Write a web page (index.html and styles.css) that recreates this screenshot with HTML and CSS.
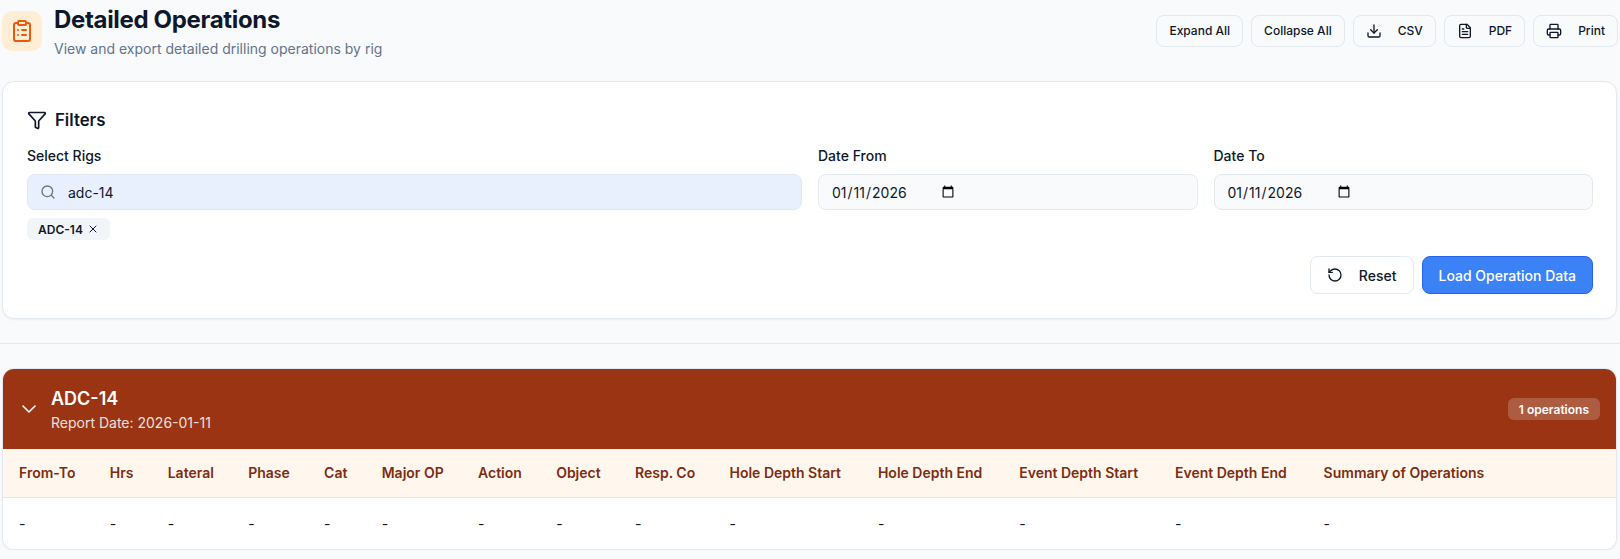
FILE: index.html
```html
<!DOCTYPE html>
<html lang="en">
<head>
<meta charset="utf-8">
<title>Detailed Operations</title>
<link rel="stylesheet" href="styles.css">
</head>
<body>
<div class="page">
  <header class="page-header">
    <div class="heading">
      <div class="heading-icon">
        <svg class="ico-24" viewBox="0 0 24 24"><rect x="8" y="2" width="8" height="4" rx="1"/><path d="M16 4h2a2 2 0 0 1 2 2v14a2 2 0 0 1-2 2H6a2 2 0 0 1-2-2V6a2 2 0 0 1 2-2h2"/><path d="M12 11h4"/><path d="M12 16h4"/><path d="M8 11h.01"/><path d="M8 16h.01"/></svg>
      </div>
      <div class="heading-text">
        <h1>Detailed Operations</h1>
        <p>View and export detailed drilling operations by rig</p>
      </div>
    </div>
    <div class="actions">
      <button class="btn-sm">Expand All</button>
      <button class="btn-sm">Collapse All</button>
      <button class="btn-sm with-icon"><svg class="ico-16" viewBox="0 0 24 24"><path d="M21 15v4a2 2 0 0 1-2 2H5a2 2 0 0 1-2-2v-4"/><path d="m7 10 5 5 5-5"/><path d="M12 15V3"/></svg>CSV</button>
      <button class="btn-sm with-icon"><svg class="ico-16" viewBox="0 0 24 24"><path d="M15 2H6a2 2 0 0 0-2 2v16a2 2 0 0 0 2 2h12a2 2 0 0 0 2-2V7Z"/><path d="M14 2v4a2 2 0 0 0 2 2h4"/><path d="M10 9H8"/><path d="M16 13H8"/><path d="M16 17H8"/></svg>PDF</button>
      <button class="btn-sm with-icon"><svg class="ico-16" viewBox="0 0 24 24"><path d="M6 18H4a2 2 0 0 1-2-2v-5a2 2 0 0 1 2-2h16a2 2 0 0 1 2 2v5a2 2 0 0 1-2 2h-2"/><path d="M6 9V3a1 1 0 0 1 1-1h10a1 1 0 0 1 1 1v6"/><rect x="6" y="14" width="12" height="8" rx="1"/></svg>Print</button>
    </div>
  </header>

  <section class="filters">
    <h2><svg class="ico-20" viewBox="0 0 24 24"><path d="M10 20a1 1 0 0 0 .553.895l2 1A1 1 0 0 0 14 21v-7a2 2 0 0 1 .517-1.341L21.74 4.67A1 1 0 0 0 21 3H3a1 1 0 0 0-.742 1.67l7.225 7.989A2 2 0 0 1 10 14z"/></svg>Filters</h2>
    <div class="filter-grid">
      <div class="field">
        <label>Select Rigs</label>
        <div class="search-box">
          <svg class="ico-16" viewBox="0 0 24 24"><circle cx="11" cy="11" r="8"/><path d="m21 21-4.3-4.3"/></svg>
          <span>adc-14</span>
        </div>
        <div class="chips"><span class="chip">ADC-14<svg class="ico-12" viewBox="0 0 24 24"><path d="M18 6 6 18"/><path d="m6 6 12 12"/></svg></span></div>
      </div>
      <div class="field">
        <label>Date From</label>
        <input class="date" type="date" value="2026-01-11">
      </div>
      <div class="field">
        <label>Date To</label>
        <input class="date" type="date" value="2026-01-11">
      </div>
    </div>
    <div class="filter-actions">
      <button class="btn-reset"><svg class="ico-16" viewBox="0 0 24 24"><path d="M3 12a9 9 0 1 0 9-9 9.75 9.75 0 0 0-6.74 2.74L3 8"/><path d="M3 3v5h5"/></svg>Reset</button>
      <button class="btn-primary">Load Operation Data</button>
    </div>
  </section>

  <hr class="divider">

  <section class="rig-card">
    <div class="rig-head">
      <div class="rig-title">
        <svg class="ico-24 chevron" viewBox="0 0 24 24"><path d="m6 9 6 6 6-6"/></svg>
        <div>
          <h3>ADC-14</h3>
          <p>Report Date: 2026-01-11</p>
        </div>
      </div>
      <span class="badge">1 operations</span>
    </div>
    <table>
      <thead>
        <tr>
          <th>From-To</th><th>Hrs</th><th>Lateral</th><th>Phase</th><th>Cat</th><th>Major OP</th><th>Action</th><th>Object</th><th>Resp. Co</th><th class="wide">Hole Depth Start</th><th class="wide">Hole Depth End</th><th class="wide">Event Depth Start</th><th class="wide">Event Depth End</th><th class="last">Summary of Operations</th>
        </tr>
      </thead>
      <tbody>
        <tr>
          <td>-</td><td>-</td><td>-</td><td>-</td><td>-</td><td>-</td><td>-</td><td>-</td><td>-</td><td>-</td><td>-</td><td>-</td><td>-</td><td>-</td>
        </tr>
      </tbody>
    </table>
  </section>
</div>
</body>
</html>
```
FILE: styles.css
```css
* { box-sizing: border-box; }
html, body { margin: 0; padding: 0; }
body {
  background: #f8fafc;
  color: #0f172a;
  font-family: Inter, "Liberation Sans", sans-serif;
  overflow: hidden;
}
svg {
  fill: none;
  stroke: currentColor;
  stroke-width: 2;
  stroke-linecap: round;
  stroke-linejoin: round;
  flex: none;
}
.ico-24 { width: 24px; height: 24px; }
.ico-20 { width: 20px; height: 20px; }
.ico-16 { width: 16px; height: 16px; }
.ico-12 { width: 12px; height: 12px; }
.page { padding: 0 3px 0 2px; }
.page-header {
  display: flex;
  justify-content: space-between;
  align-items: flex-start;
  height: 81px;
}
.heading { display: flex; gap: 12px; }
.heading-icon {
  width: 40px;
  height: 40px;
  margin-top: 11px;
  border-radius: 10px;
  background: #ffedd5;
  color: #ea580c;
  display: flex;
  align-items: center;
  justify-content: center;
}
.heading-text { padding-top: 4px; }
h1 { margin: 0; font-size: 24px; line-height: 32px; font-weight: 700; letter-spacing: -0.33px; }
.heading-text p { margin: 3px 0 0; font-size: 14px; line-height: 20px; color: #64748b; }
.actions { display: flex; gap: 8px; margin: 15px -1px 0 0; }
button { font-family: inherit; cursor: pointer; }
.btn-sm {
  height: 32px;
  padding: 0 12px 1px;
  display: flex;
  align-items: center;
  background: #f8fafc;
  border: 1px solid #e2e8f0;
  border-radius: 8px;
  color: #0f172a;
  font-size: 12px;
  font-weight: 500;
}
.with-icon { gap: 16px; }
.filters {
  background: #fff;
  border: 1px solid #e2e8f0;
  border-radius: 12px;
  box-shadow: 0 1px 2px rgba(15, 23, 42, .05);
  padding: 26px 23px 24px 24px;
  height: 238px;
}
h2 {
  margin: 0 0 14px;
  display: flex;
  align-items: center;
  gap: 8px;
  font-size: 16.8px;
  line-height: 24px;
  font-weight: 600;
}
.filter-grid {
  display: grid;
  grid-template-columns: 775px 1fr 1fr;
  gap: 16px;
}
.field label {
  display: block;
  font-size: 14px;
  line-height: 20px;
  font-weight: 500;
  margin-bottom: 8px;
}
.search-box {
  height: 36px;
  display: flex;
  align-items: center;
  gap: 12px;
  padding: 0 12px;
  background: #e8f0fe;
  border: 1px solid #e2e8f0;
  border-radius: 8px;
  font-size: 14px;
}
.search-box svg { color: #64748b; }
.chips { margin-top: 8px; display: flex; }
.chip {
  display: inline-flex;
  align-items: center;
  gap: 4px;
  height: 22px;
  padding: 0 11px;
  background: #f1f5f9;
  border-radius: 6px;
  font-size: 12px;
  font-weight: 600;
}
.date {
  display: block;
  width: 100%;
  height: 36px;
  padding: 0 12px;
  background: #f8fafc;
  border: 1px solid #e2e8f0;
  border-radius: 8px;
  color: #0f172a;
  font-family: inherit;
  font-size: 14px;
}
.date::-webkit-datetime-edit { flex: 0 0 auto; width: 87px; }
.date::-webkit-calendar-picker-indicator { margin-left: 0; }
.filter-actions {
  display: flex;
  justify-content: flex-end;
  gap: 8px;
  margin-top: 16px;
}
.btn-reset, .btn-primary {
  height: 38px;
  padding: 0 16px;
  display: flex;
  align-items: center;
  border-radius: 8px;
  font-size: 14px;
  font-weight: 500;
}
.btn-reset {
  gap: 16px;
  background: #fff;
  border: 1px solid #e2e8f0;
  color: #0f172a;
}
.btn-primary {
  background: #3b82f6;
  border: 1px solid #2563eb;
  color: #fff;
}
.divider {
  margin: 24px -3px 24px -2px;
  border: 0;
  border-top: 1px solid #e2e8f0;
}
.rig-card {
  background: #fff;
  border: 1px solid #e2e8f0;
  border-radius: 12px;
  box-shadow: 0 1px 2px rgba(15, 23, 42, .05);
  overflow: hidden;
}
.rig-head {
  height: 80px;
  background: #9a3412;
  color: #fff;
  display: flex;
  align-items: center;
  justify-content: space-between;
  padding: 0 16px;
}
.rig-title { display: flex; align-items: center; gap: 10px; }
.chevron { margin-left: -2px; stroke-width: 1.6; }
h3 { margin: 0; font-size: 18px; line-height: 28px; font-weight: 600; }
.rig-title p { margin: 0; font-size: 14px; line-height: 20px; opacity: .85; }
.badge {
  height: 22px;
  display: flex;
  align-items: center;
  padding: 0 11px;
  background: rgba(255, 255, 255, .2);
  border-radius: 6px;
  font-size: 12px;
  font-weight: 600;
}
table { width: 100%; border-collapse: collapse; }
th {
  height: 48px;
  padding: 0 18.3px 0 16px;
  text-align: left;
  white-space: nowrap;
  background: #fff7ed;
  border-bottom: 1px solid #e2e8f0;
  color: #7c2d12;
  font-size: 14px;
  font-weight: 600;
}
th.wide { padding-right: 20.9px; }
th.last { width: 100%; }
td {
  height: 52px;
  padding: 0 16px;
  font-size: 14px;
  background: #fff;
}
```
